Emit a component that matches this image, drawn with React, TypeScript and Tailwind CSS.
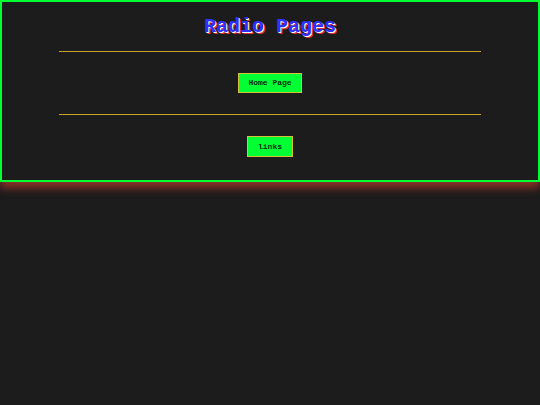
export default function App() {
    return (
        <div className="min-h-[405px] w-full bg-[#1c1c1c] font-['Liberation_Mono',monospace]">
            {/* header box */}
            <div className="h-[182px] border-2 border-[#00ff33] shadow-[0_6px_8px_rgba(230,70,50,0.55)] flex flex-col items-center">
                <h1
                    className="mt-[12px] text-[20px] leading-[26px] font-bold text-[#2f2fff]"
                    style={{ textShadow: "1px 1px 0 #ffffff, 2px 2px 0 #e03030" }}
                >
                    Radio Pages
                </h1>
                <div className="mt-[11px] h-px w-[422px] bg-[#c9a227]" />
                <a className="mt-[21px] h-[20px] w-[64px] flex items-center justify-center bg-[#00ff33] border border-[#d4c23a] text-[8px] font-bold text-[#083010]">
                    Home Page
                </a>
                <div className="mt-[21px] h-px w-[422px] bg-[#c9a227]" />
                <a className="mt-[21px] h-[21px] w-[46px] flex items-center justify-center bg-[#00ff33] border border-[#d4c23a] text-[8px] font-bold text-[#083010]">
                    links
                </a>
            </div>
        </div>
    );
}
